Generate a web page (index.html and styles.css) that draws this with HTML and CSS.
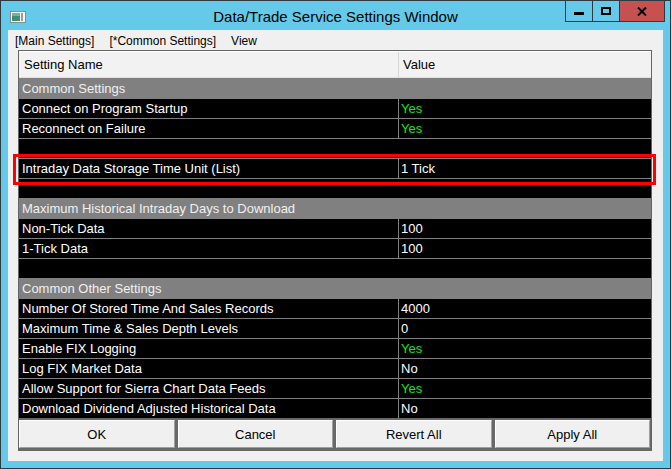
FILE: index.html
```html
<!DOCTYPE html>
<html>
<head>
<meta charset="utf-8">
<link rel="stylesheet" href="styles.css">
</head>
<body>
<div class="window">
  <div class="titlebar">
    <div class="app-icon">
      <svg width="16" height="12" viewBox="0 0 16 12">
        <rect x="0.5" y="0.5" width="15" height="11" fill="#f4f4f4" stroke="#8c8c8c"/>
        <rect x="2" y="2" width="8" height="8" fill="#3f8f78"/>
        <rect x="2" y="2" width="8" height="3" fill="#6fb59b"/>
        <rect x="11" y="2" width="2" height="8" fill="#9a9a9a"/>
      </svg>
    </div>
    <div class="title">Data/Trade Service Settings Window</div>
    <div class="controls">
      <div class="ctl min"><span class="min-bar"></span></div>
      <div class="ctl max"><span class="max-box"></span></div>
      <div class="ctl close">
        <svg width="10" height="9" viewBox="0 0 10 9"><path d="M1 0.5 L9 8.5 M9 0.5 L1 8.5" stroke="#000" stroke-width="2"/></svg>
      </div>
    </div>
  </div>
  <div class="client">
    <div class="menubar">
      <span class="menu-item">[Main Settings]</span>
      <span class="menu-item">[*Common Settings]</span>
      <span class="menu-item">View</span>
    </div>
    <div class="grid">
      <div class="header">
        <div class="hcell">Setting Name</div>
        <div class="hcell hval">Value</div>
      </div>
      <div class="group">Common Settings</div>
      <div class="row"><div class="name">Connect on Program Startup</div><div class="val yes">Yes</div></div>
      <div class="row"><div class="name">Reconnect on Failure</div><div class="val yes">Yes</div></div>
      <div class="row blank"></div>
      <div class="row"><div class="name">Intraday Data Storage Time Unit (List)</div><div class="val">1 Tick</div></div>
      <div class="row blank"></div>
      <div class="group">Maximum Historical Intraday Days to Download</div>
      <div class="row"><div class="name">Non-Tick Data</div><div class="val">100</div></div>
      <div class="row"><div class="name">1-Tick Data</div><div class="val">100</div></div>
      <div class="row blank"></div>
      <div class="group">Common Other Settings</div>
      <div class="row"><div class="name">Number Of Stored Time And Sales Records</div><div class="val">4000</div></div>
      <div class="row"><div class="name">Maximum Time &amp; Sales Depth Levels</div><div class="val">0</div></div>
      <div class="row"><div class="name">Enable FIX Logging</div><div class="val yes">Yes</div></div>
      <div class="row"><div class="name">Log FIX Market Data</div><div class="val">No</div></div>
      <div class="row"><div class="name">Allow Support for Sierra Chart Data Feeds</div><div class="val yes">Yes</div></div>
      <div class="row"><div class="name">Download Dividend Adjusted Historical Data</div><div class="val">No</div></div>
      <div class="buttons">
        <div class="btn">OK</div>
        <div class="btn">Cancel</div>
        <div class="btn">Revert All</div>
        <div class="btn">Apply All</div>
      </div>
      <div class="highlight"></div>
    </div>
  </div>
</div>
</body>
</html>
```

FILE: styles.css
```css
* { box-sizing: border-box; }
html, body { margin: 0; padding: 0; }
body {
  width: 671px;
  height: 469px;
  overflow: hidden;
  font-family: "Liberation Sans", Arial, sans-serif;
  background: #65c9e9;
}
.window {
  width: 671px;
  height: 469px;
  border: 1px solid #2e3a40;
  background: #65c9e9;
  display: flex;
  flex-direction: column;
}
.titlebar {
  height: 29px;
  display: grid;
  grid-template-columns: 1fr auto 1fr;
  align-items: center;
}
.app-icon {
  padding-left: 9px;
  display: flex;
  align-items: center;
  padding-top: 2px;
}
.app-icon svg { display: block; }
.title {
  font-size: 15px;
  color: #000;
  padding-top: 1px;
}
.controls {
  justify-self: end;
  align-self: start;
  display: flex;
  margin-right: 5px;
  margin-top: -1px;
}
.ctl {
  height: 22px;
  border: 1px solid #2e3a40;
  border-left: none;
  display: flex;
  align-items: center;
  justify-content: center;
}
.ctl.min { width: 28px; border-left: 1px solid #2e3a40; }
.ctl.max { width: 27px; }
.ctl.close { width: 45px; background: #c75050; }
.min-bar {
  display: block;
  width: 10px;
  height: 3px;
  background: #000;
  margin-top: 5px;
}
.max-box {
  display: block;
  width: 10px;
  height: 8px;
  border: 2px solid #000;
}
.ctl.close svg { display: block; }
.client {
  margin: 0 7px 7px 7px;
  flex: 1;
  background: #f0f0f0;
  padding: 0 11px 10px 10px;
  display: flex;
  flex-direction: column;
}
.menubar {
  height: 20px;
  display: flex;
  align-items: center;
  gap: 15px;
  margin-left: -3px;
  font-size: 12px;
  color: #000;
  padding-top: 2px;
}
.grid {
  position: relative;
  border: 1px solid #646464;
  border-bottom: none;
  background: #000;
  display: flex;
  flex-direction: column;
}
.header {
  height: 27px;
  display: grid;
  grid-template-columns: 379px 1fr;
  background: #f2f2f2;
  border-top: 1px solid #ffffff;
  border-bottom: 1px solid #e0e0e0;
  font-size: 13px;
  color: #000;
}
.hcell {
  display: flex;
  align-items: center;
  padding-left: 5px;
}
.hval {
  border-left: 1px solid #d8d8d8;
  padding-left: 4px;
}
.group {
  height: 20px;
  background: #808080;
  color: #f0f0f0;
  font-size: 13px;
  display: flex;
  align-items: center;
  padding-left: 3px;
}
.row {
  height: 20px;
  border-top: 1px solid #808080;
  display: grid;
  grid-template-columns: 379px 1fr;
  font-size: 13px;
  color: #fff;
  background: #000;
}
.name {
  display: flex;
  align-items: center;
  padding-left: 3px;
  white-space: nowrap;
}
.val {
  display: flex;
  align-items: center;
  padding-left: 2px;
  border-left: 1px solid #808080;
}
.val.yes { color: #1be11b; }
.buttons {
  background: #696969;
  padding: 2px 1px 3px 0;
  display: flex;
  gap: 3px;
}
.btn {
  flex: 1;
  height: 28px;
  background: #f0f0f0;
  border-top: 1px solid #ffffff;
  border-left: 1px solid #ffffff;
  border-right: 1px solid #a0a0a0;
  border-bottom: 1px solid #a0a0a0;
  display: flex;
  align-items: center;
  justify-content: center;
  font-size: 13px;
  color: #000;
}
.highlight {
  position: absolute;
  left: -6px;
  top: 103px;
  width: 643px;
  height: 31px;
  border: 3px solid #ff0000;
}
```
